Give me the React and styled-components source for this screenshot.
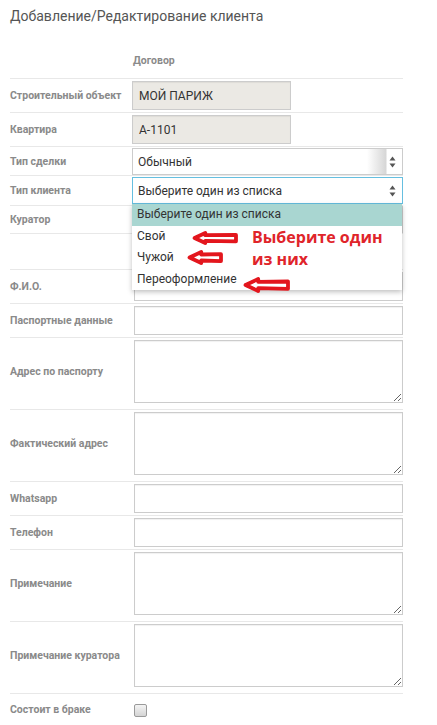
import React from 'react';
import styled, { createGlobalStyle } from 'styled-components';

const Global = createGlobalStyle`
  body {
    margin: 0;
    background: #fff;
    font-family: Roboto, "Open Sans", sans-serif;
  }
`;

const Page = styled.div`
  width: 393px;
  padding-left: 10px;
`;

const Title = styled.h3`
  margin: 0;
  padding-top: 6px;
  font-size: 14px;
  line-height: 20px;
  font-weight: 400;
  color: #555;
`;

const ColHead = styled.div`
  padding: 27px 0 9px 123px;
  font-size: 10.5px;
  line-height: 16px;
  font-weight: 700;
  color: #8a8a8a;
`;

const Row = styled.div`
  display: grid;
  grid-template-columns: 122px 1fr;
  align-items: center;
  border-top: 1px solid #e8e8e8;
  padding: ${p => p.$pt ?? 2}px 0 ${p => p.$pb ?? 2}px;
`;

const Label = styled.div`
  font-size: 10.5px;
  line-height: 14px;
  font-weight: 700;
  color: #8a8a8a;
  white-space: nowrap;
`;

const Cell = styled.div`
  position: relative;
  margin-left: ${p => (p.$inset ? 2 : 0)}px;
  display: flex;
`;

const Input = styled.div`
  box-sizing: border-box;
  width: ${p => p.$w || '100%'};
  height: 29px;
  border: 1px solid #ccc;
  background: ${p => (p.$readonly ? '#ebe9e4' : '#fff')};
  box-shadow: inset 0 1px 1px rgba(0, 0, 0, 0.06);
  padding: 0 6px;
  font-size: 12px;
  color: #333;
  display: flex;
  align-items: center;
`;

const TextArea = styled.textarea`
  box-sizing: border-box;
  width: 100%;
  height: 63px;
  margin: 0;
  border: 1px solid #ccc;
  box-shadow: inset 0 1px 1px rgba(0, 0, 0, 0.06);
  border-radius: 0;
  display: block;
  resize: vertical;
  outline: none;
`;

const SelectBox = styled.div`
  box-sizing: border-box;
  width: 100%;
  height: 27px;
  border: 1px solid ${p => (p.$focus ? '#66bfe0' : '#ccc')};
  background: ${p =>
    p.$shade
      ? 'linear-gradient(to right, #fff 0, #fff 234px, #d6d6d6 253px, #fff 254px)'
      : '#fff'};
  padding: 0 6px 0 5px;
  font-size: 12px;
  color: #333;
  display: flex;
  align-items: center;
  justify-content: space-between;
`;

const Dropdown = styled.div`
  position: absolute;
  top: 100%;
  left: 0;
  width: 270px;
  background: #fff;
  box-shadow: 0 2px 5px rgba(0, 0, 0, 0.25);
  z-index: 10;
`;

const Option = styled.div`
  height: 21.5px;
  line-height: 21.5px;
  padding-left: 5px;
  font-size: 12px;
  color: #333;
  background: ${p => (p.$active ? '#a9d6d1' : 'transparent')};
`;

const Note = styled.div`
  position: absolute;
  left: 120px;
  top: 22px;
  font-family: "Open Sans", sans-serif;
  font-size: 16px;
  line-height: 22px;
  font-weight: 700;
  color: #e0242a;
  white-space: nowrap;
`;

const ArrowMark = styled.svg`
  position: absolute;
  left: ${p => p.$x}px;
  top: ${p => p.$y}px;
  overflow: visible;
`;

const Check = styled.div`
  width: 13px;
  height: 13px;
  box-sizing: border-box;
  border: 1px solid #9a9a9a;
  border-radius: 2px;
  background: linear-gradient(#f4f4f4, #d4d4d4);
`;

const Spacer = styled.div`
  height: ${p => p.$h}px;
`;

const UpDown = () => (
  <svg width="7" height="12" viewBox="0 0 7 12">
    <path d="M3.5 0.5 L6.5 4.5 L0.5 4.5 Z" fill="#555" />
    <path d="M3.5 11.5 L6.5 7.5 L0.5 7.5 Z" fill="#555" />
  </svg>
);

const Arrow = ({ x, y, w, h }) => (
  <ArrowMark $x={x} $y={y} width={w} height={h} viewBox={`0 0 ${w} ${h}`}>
    <path
      d={`M2.5 ${h / 2} L${h * 0.95} 2 L${h * 0.95} ${h * 0.3} L${w - 2} ${h * 0.28} L${w - 2} ${h * 0.74} L${h * 0.95} ${h * 0.7} L${h * 0.95} ${h - 2} Z`}
      fill="#fff"
      stroke="#e3161d"
      strokeWidth="3.8"
      strokeLinejoin="round"
    />
  </ArrowMark>
);

const fields = [
  { label: 'Ф.И.О.' },
  { label: 'Паспортные данные' },
  { label: 'Адрес по паспорту', area: true },
  { label: 'Фактический адрес', area: true },
  { label: 'Whatsapp' },
  { label: 'Телефон' },
  { label: 'Примечание', area: true },
  { label: 'Примечание куратора', area: true },
];

export default function App() {
  return (
    <Page>
      <Global />
      <Title>Добавление/Редактирование клиента</Title>
      <ColHead>Договор</ColHead>

      <Row>
        <Label>Строительный объект</Label>
        <Cell>
          <Input $readonly $w="159px">МОЙ ПАРИЖ</Input>
        </Cell>
      </Row>
      <Row>
        <Label>Квартира</Label>
        <Cell>
          <Input $readonly $w="159px">А-1101</Input>
        </Cell>
      </Row>
      <Row $pt={1} $pb={0}>
        <Label>Тип сделки</Label>
        <Cell>
          <SelectBox $shade>
            Обычный
            <UpDown />
          </SelectBox>
        </Cell>
      </Row>
      <Row $pt={1} $pb={1}>
        <Label>Тип клиента</Label>
        <Cell>
          <SelectBox $focus>
            Выберите один из списка
            <UpDown />
          </SelectBox>
          <Dropdown>
            <Option $active>Выберите один из списка</Option>
            <Option>Свой</Option>
            <Option>Чужой</Option>
            <Option>Переоформление</Option>
            <Arrow x={60} y={27} w={46} h={14} />
            <Arrow x={55} y={46} w={36} h={15} />
            <Arrow x={111} y={73} w={47} h={16} />
            <Note>
              Выберите один
              <br />
              из них
            </Note>
          </Dropdown>
        </Cell>
      </Row>
      <Row $pt={0} $pb={0}>
        <Label>Куратор</Label>
        <Cell>
          <SelectBox />
        </Cell>
      </Row>
      <Row $pt={0} $pb={0}>
        <Label />
        <Spacer $h={35} />
      </Row>

      {fields.map(f => (
        <Row key={f.label} $pb={f.area ? 6 : 2}>
          <Label>{f.label}</Label>
          <Cell $inset>{f.area ? <TextArea /> : <Input />}</Cell>
        </Row>
      ))}

      <Row $pt={9} $pb={12}>
        <Label>Состоит в браке</Label>
        <Cell $inset>
          <Check />
        </Cell>
      </Row>
    </Page>
  );
}
